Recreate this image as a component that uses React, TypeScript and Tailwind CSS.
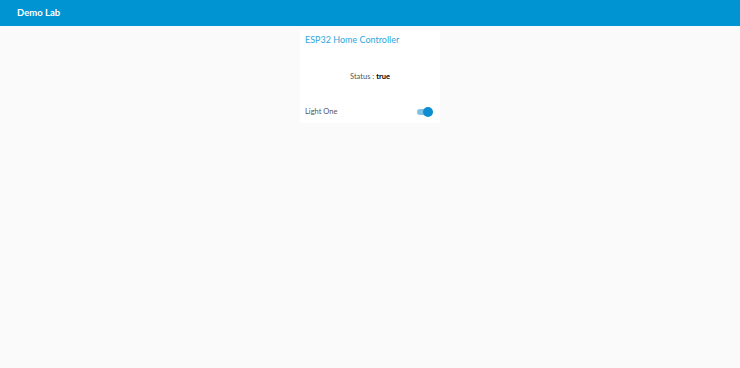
import React from "react";

export default function App() {
  return (
    <div className="min-h-[368px] w-full bg-[#fafafa]" style={{ fontFamily: "Lato, 'Open Sans', sans-serif" }}>
      {/* Header */}
      <div className="h-[26px] bg-[#0094d3] flex items-center px-[17px]">
        <span className="text-white text-[9.5px] font-bold">Demo Lab</span>
      </div>

      {/* Card */}
      <div className="flex justify-center pt-[4px]">
        <div className="w-[140px] h-[93px] bg-white flex flex-col px-[5px]">
          <h3 className="text-[#2fa6dd] text-[9px] mt-[3px] leading-[14px]">ESP32 Home Controller</h3>
          <p className="text-[7.5px] text-[#555] text-center mt-[24px] leading-[12px]">
            Status : <span className="font-bold text-black">true</span>
          </p>
          <div className="flex items-center justify-between mt-[23px] pr-[3px]">
            <span className="text-[7.5px] text-[#555] leading-[12px]">Light One</span>
            <div className="relative w-[15px] h-[6px] rounded-full bg-[#7ec3e6]">
              <div className="absolute right-[-1px] top-[-2px] w-[10px] h-[10px] rounded-full bg-[#0c8ed0]" />
            </div>
          </div>
        </div>
      </div>
    </div>
  );
}
